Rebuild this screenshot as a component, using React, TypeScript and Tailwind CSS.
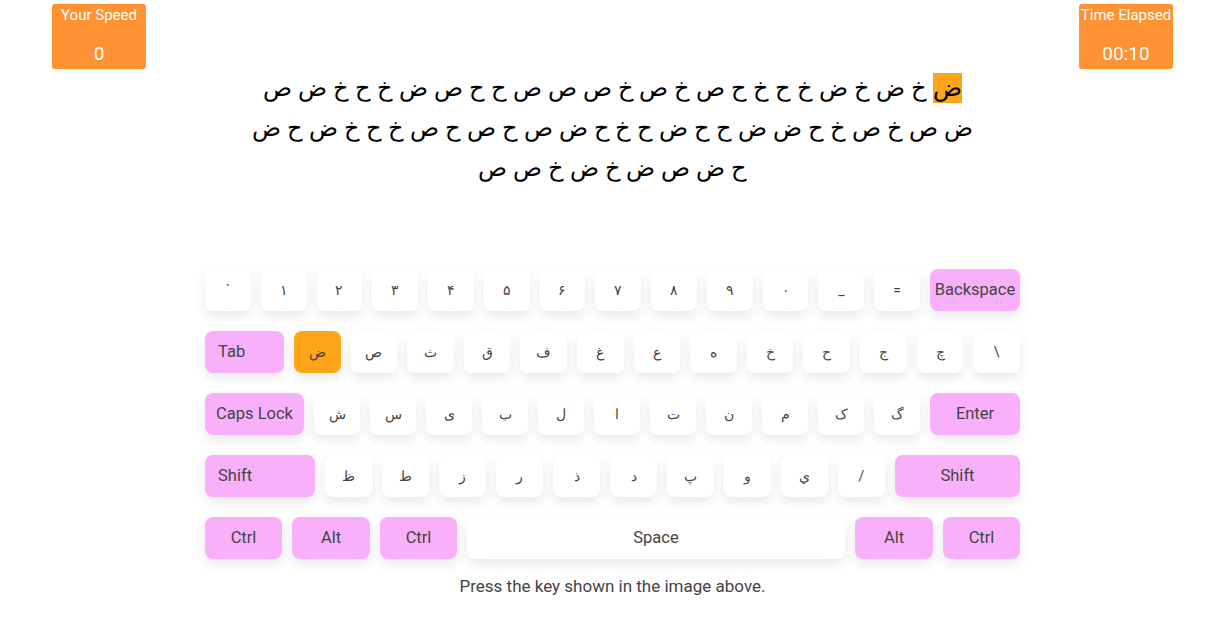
import React from "react";

const line1 = "ض خ ض خ ض خ ح خ ح ص خ ص خ ص ص ص ح ح ص ض خ ح خ ض ص".split(" ");
const line2 = "ض ص خ ص خ ح ض ض ح ح ض ح خ ح ض ص ح ص ح ص خ ح خ ض ح ض".split(" ");
const line3 = "ح ض ص ض خ ض خ ص ص".split(" ");

type K = { label: string; w?: string; kind?: "pink" | "orange" | "white"; left?: boolean; ar?: boolean };

const ar = (s: string, kind: K["kind"] = "white"): K => ({ label: s, ar: true, kind });

const rows: K[][] = [
  [
    ..."` ۱ ۲ ۳ ۴ ۵ ۶ ۷ ۸ ۹ ۰ _ =".split(" ").map((c) => ar(c)),
    { label: "Backspace", w: "w-[90px]", kind: "pink" },
  ],
  [
    { label: "Tab", w: "w-[79px]", kind: "pink", left: true },
    ar("ض", "orange"),
    ..."ص ث ق ف غ ع ه خ ح ج چ \\".split(" ").map((c) => ar(c)),
  ],
  [
    { label: "Caps Lock", w: "w-[99px]", kind: "pink" },
    ..."ش س ی ب ل ا ت ن م ک گ".split(" ").map((c) => ar(c)),
    { label: "Enter", w: "w-[90px]", kind: "pink" },
  ],
  [
    { label: "Shift", w: "w-[110px]", kind: "pink", left: true },
    ..."ظ ط ز ر ذ د پ و ي /".split(" ").map((c) => ar(c)),
    { label: "Shift", w: "w-[125px]", kind: "pink" },
  ],
  [
    { label: "Ctrl", w: "w-[77px]", kind: "pink" },
    { label: "Alt", w: "w-[78px]", kind: "pink" },
    { label: "Ctrl", w: "w-[77px]", kind: "pink" },
    { label: "Space", kind: "white" },
    { label: "Alt", w: "w-[78px]", kind: "pink" },
    { label: "Ctrl", w: "w-[77px]", kind: "pink" },
  ],
];

function Key({ k }: { k: K }) {
  const bg =
    k.kind === "pink" ? "bg-[#f9b0fb]" : k.kind === "orange" ? "bg-[#ffa51a]" : "bg-white";
  return (
    <div
      className={`${k.w ? k.w + " shrink-0" : "flex-1 min-w-0"} h-[42px] rounded-lg ${bg} shadow-[0_5px_12px_rgba(0,0,0,0.09)] flex items-center ${
        k.left ? "justify-start pl-[13px]" : "justify-center"
      } text-[#444444] ${k.ar ? "text-[14px]" : "text-[16.5px]"}`}
    >
      {k.label}
    </div>
  );
}

function Stat({ title, value }: { title: string; value: string }) {
  return (
    <div className="w-[94px] h-[65px] shrink-0 rounded-[3px] bg-[#ff9233] text-white flex flex-col items-center pt-[1px]">
      <div className="text-[15px] leading-[20px] whitespace-nowrap">{title}</div>
      <div className="text-[19px] leading-[28px] mt-[15px]">{value}</div>
    </div>
  );
}

function Line({ chars, first }: { chars: string[]; first?: boolean }) {
  return (
    <div dir="rtl" className="text-center text-[24px] leading-[40px] text-black whitespace-nowrap">
      {chars.map((c, i) => (
        <React.Fragment key={i}>
          {first && i === 0 ? <span className="bg-[#ffa51a] py-[1px]">{c}</span> : <span>{c}</span>}
          {i < chars.length - 1 ? " " : ""}
        </React.Fragment>
      ))}
    </div>
  );
}

export default function App() {
  return (
    <div className="w-[1219px] h-[623px] bg-white pl-[6px] overflow-hidden font-['Roboto',sans-serif]">
      <div className="px-[46px] pt-[4px] flex items-start">
        <Stat title="Your Speed" value="0" />
        <div className="flex-1 pt-[64px]">
          <Line chars={line1} first />
          <Line chars={line2} />
          <Line chars={line3} />
        </div>
        <Stat title="Time Elapsed" value="00:10" />
      </div>
      <div className="w-[815px] mx-auto mt-[81px] flex flex-col gap-[20px]">
        {rows.map((r, i) => (
          <div key={i} className="flex gap-[10px]">
            {r.map((k, j) => (
              <Key key={j} k={k} />
            ))}
          </div>
        ))}
      </div>
      <div className="text-center text-[17px] leading-[24px] text-[#444444] mt-[15px]">
        Press the key shown in the image above.
      </div>
    </div>
  );
}
